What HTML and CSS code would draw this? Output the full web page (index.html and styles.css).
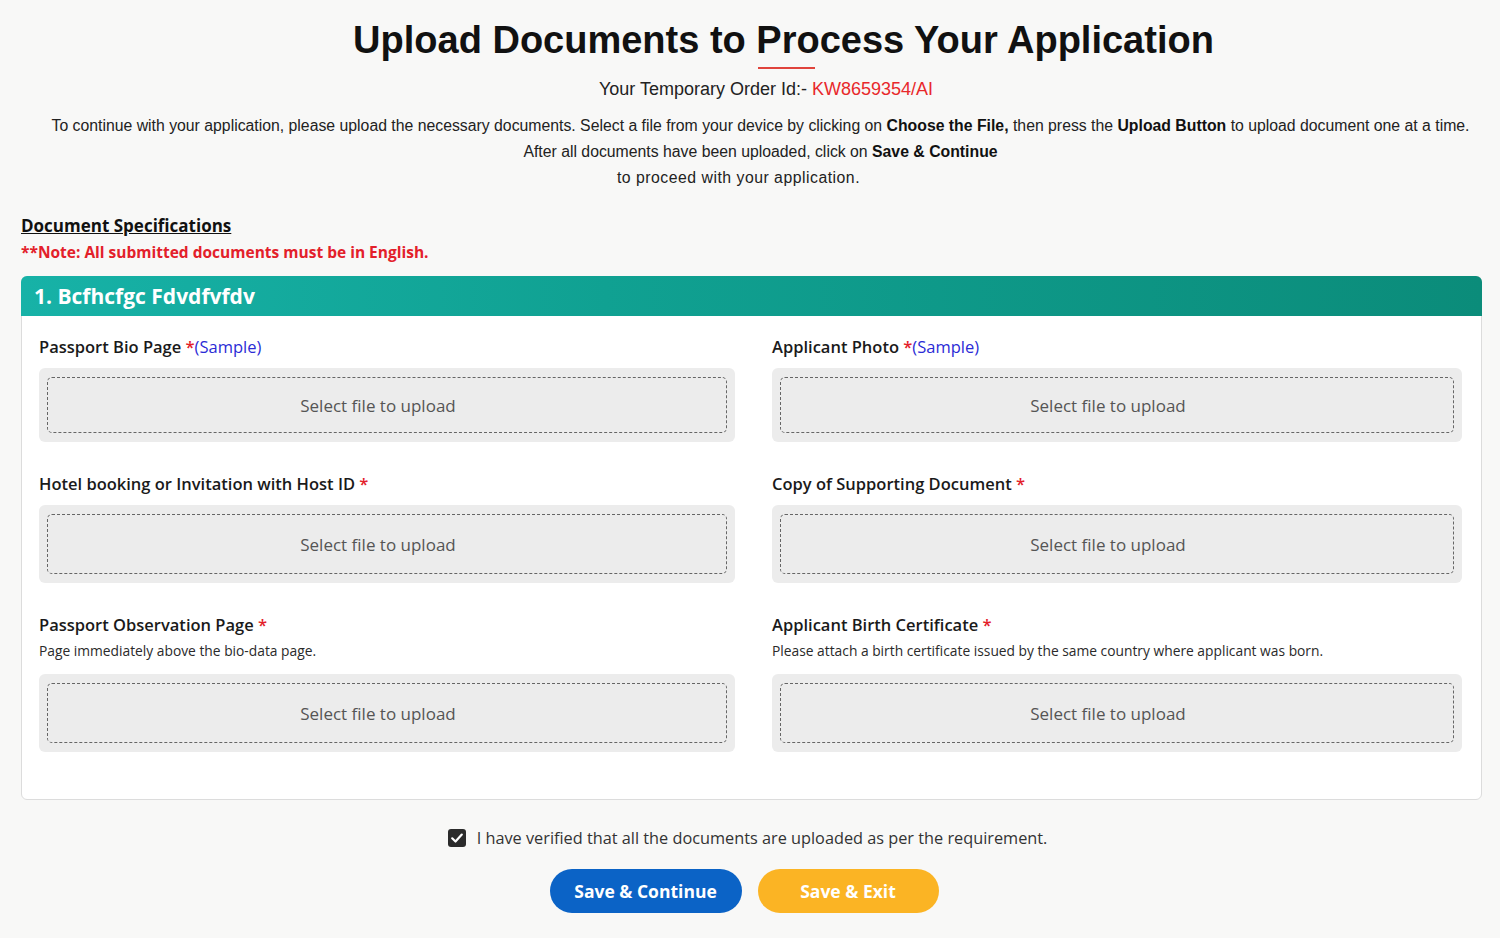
FILE: index.html
```html
<!DOCTYPE html>
<html lang="en">
<head>
<meta charset="utf-8">
<title>Upload Documents</title>
<link rel="stylesheet" href="styles.css">
</head>
<body>
<main class="page">
  <header class="intro">
    <h1 class="title">Upload Documents to Process Your Application</h1>
    <div class="title-rule"></div>
    <p class="order">Your Temporary Order Id:- <span class="order-id">KW8659354/AI</span></p>
    <p class="lead">To continue with your application, please upload the necessary documents. Select a file from your device by clicking on <b>Choose the File,</b> then press the <b>Upload Button</b> to upload document one at a time.<br>After all documents have been uploaded, click on <b>Save &amp; Continue</b><br><span class="lead-last">to proceed with your application.</span></p>
  </header>

  <section class="specs">
    <h2 class="specs-title">Document Specifications</h2>
    <p class="note">**Note: All submitted documents must be in English.</p>
  </section>

  <section class="card">
    <div class="card-head">1. Bcfhcfgc Fdvdfvfdv</div>
    <div class="card-body">
      <div class="field">
        <div class="label">Passport Bio Page <span class="req">*</span><a class="sample">(Sample)</a></div>
        <div class="drop"><div class="drop-inner">Select file to upload</div></div>
      </div>
      <div class="field">
        <div class="label">Applicant Photo <span class="req">*</span><a class="sample">(Sample)</a></div>
        <div class="drop"><div class="drop-inner">Select file to upload</div></div>
      </div>
      <div class="field">
        <div class="label">Hotel booking or Invitation with Host ID <span class="req">*</span></div>
        <div class="drop tall"><div class="drop-inner">Select file to upload</div></div>
      </div>
      <div class="field">
        <div class="label">Copy of Supporting Document <span class="req">*</span></div>
        <div class="drop tall"><div class="drop-inner">Select file to upload</div></div>
      </div>
      <div class="field">
        <div class="label">Passport Observation Page <span class="req">*</span></div>
        <div class="help">Page immediately above the bio-data page.</div>
        <div class="drop tall low"><div class="drop-inner">Select file to upload</div></div>
      </div>
      <div class="field">
        <div class="label">Applicant Birth Certificate <span class="req">*</span></div>
        <div class="help">Please attach a birth certificate issued by the same country where applicant was born.</div>
        <div class="drop tall low"><div class="drop-inner">Select file to upload</div></div>
      </div>
    </div>
  </section>

  <footer class="actions">
    <label class="verify">
      <span class="check"><svg viewBox="0 0 18 18" width="18" height="18"><rect x="0" y="0" width="18" height="18" rx="3" fill="#2b2b2b"/><path d="M4.2 9.3 L7.5 12.5 L13.8 5.6" fill="none" stroke="#fff" stroke-width="2.2" stroke-linecap="round" stroke-linejoin="round"/></svg></span>
      I have verified that all the documents are uploaded as per the requirement.
    </label>
    <div class="buttons">
      <button class="btn btn-primary">Save &amp; Continue</button>
      <button class="btn btn-warn">Save &amp; Exit</button>
    </div>
  </footer>
</main>
</body>
</html>
```

FILE: styles.css
```css
* { box-sizing: border-box; }
html, body { margin: 0; padding: 0; }
body {
  background: #f8f8f7;
  color: #1a1a1a;
  font-family: "Open Sans", "Noto Sans", sans-serif;
}
.page {
  width: 1500px;
  height: 938px;
  padding: 18px 18px 0 21px;
}
.intro {
  display: flex;
  flex-direction: column;
  align-items: center;
  text-align: center;
}
.title {
  margin: 0 0 0 64px;
  font-family: "Liberation Sans", Arial, sans-serif;
  font-weight: 700;
  font-size: 38px;
  line-height: 44px;
  color: #111;
}
.title-rule {
  width: 57px;
  height: 2px;
  background: #e0443c;
  margin: 5px 0 0 70px;
}
.order {
  margin: 9px 0 0 29px;
  font-family: "Liberation Sans", Arial, sans-serif;
  font-size: 18px;
  line-height: 22px;
  color: #222;
}
.order-id { color: #e8282b; }
.lead {
  margin: 13px 0 0 18px;
  font-family: "Liberation Sans", Arial, sans-serif;
  font-size: 15.8px;
  line-height: 26px;
  color: #222;
  white-space: nowrap;
}
.lead b { font-weight: 700; color: #111; }
.lead-last { letter-spacing: 0.5px; margin-right: 44px; }

.specs { margin-top: 23px; }
.specs-title {
  margin: 0;
  font-size: 17px;
  font-weight: 700;
  line-height: 24px;
  text-decoration: underline;
  color: #111;
}
.note {
  margin: 3px 0 0 0;
  font-size: 15.5px;
  font-weight: 700;
  line-height: 22px;
  color: #e3202a;
}

.card {
  margin-top: 13px;
  width: 1461px;
  background: #fff;
  border: 1px solid #dcdcdc;
  border-radius: 6px;
}
.card-head {
  height: 40px;
  margin: -1px -1px 0 -1px;
  padding: 0 13px;
  display: flex;
  align-items: center;
  background: linear-gradient(90deg, #17b2a7 0%, #10a192 40%, #0b8c7a 100%);
  border-radius: 6px 6px 0 0;
  color: #fff;
  font-size: 21px;
  font-weight: 700;
}
.card-body {
  display: grid;
  grid-template-columns: 696px 690px;
  column-gap: 37px;
  row-gap: 29px;
  padding: 18px 20px 47px 17px;
}
.field { display: flex; flex-direction: column; }
.label {
  font-size: 16.5px;
  font-weight: 600;
  line-height: 26px;
  color: #1a1a1a;
}
.req { color: #e3202a; }
.sample { color: #2b2bd6; font-weight: 400; }
.help {
  margin-top: 4px;
  font-size: 13.8px;
  line-height: 18px;
  color: #2a2a2a;
}
.drop {
  margin-top: 8px;
  height: 74px;
  background: #ececec;
  border-radius: 6px;
  padding: 9px 8px;
}
.drop.tall { height: 78px; }
.drop.low { margin-top: 14px; }
.drop-inner {
  height: 100%;
  border: 1.5px dashed #666;
  border-radius: 5px;
  display: flex;
  align-items: center;
  justify-content: center;
  padding-right: 18px;
  font-size: 17px;
  color: #555;
}

.actions {
  display: flex;
  flex-direction: column;
  align-items: center;
  margin-top: 26px;
}
.verify {
  display: flex;
  align-items: center;
  gap: 11px;
  font-size: 16.3px;
  color: #333;
  line-height: 24px;
  margin-left: -8px;
}
.check { display: flex; }
.buttons {
  display: flex;
  gap: 16px;
  margin-top: 19px;
  margin-left: -15px;
}
.btn {
  height: 44px;
  border: none;
  border-radius: 22px;
  color: #fff;
  font-family: "Open Sans", "Noto Sans", sans-serif;
  font-size: 17.5px;
  font-weight: 700;
  padding: 0;
}
.btn-primary { width: 192px; background: #0b63c6; }
.btn-warn { width: 181px; background: #fbb424; }
```
